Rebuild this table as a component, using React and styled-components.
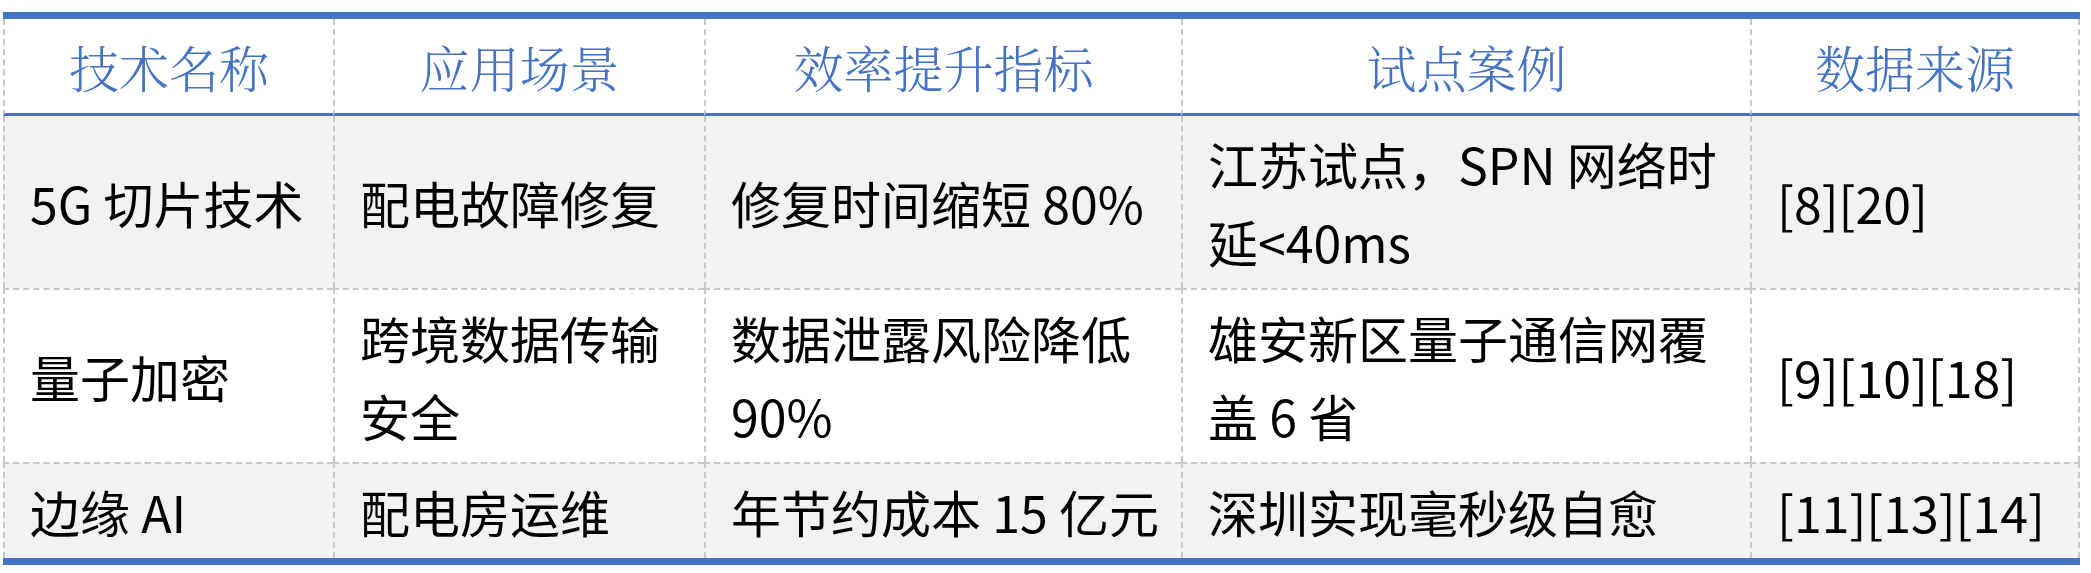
import React from "react";
import styled, { createGlobalStyle } from "styled-components";

const Global = createGlobalStyle`
  html, body { margin: 0; padding: 0; background: #ffffff; }
  body { font-family: "Noto Sans CJK SC", "Noto Sans", sans-serif; }
`;

const BLUE = "#4472C4";
const DASH = "2px dashed #c8c8c8";

const Page = styled.div`
  padding: 12px 0 0 3px;
`;

const Table = styled.table`
  width: 2077px;
  table-layout: fixed;
  border-collapse: separate;
  border-spacing: 0;
  border-top: 7px solid ${BLUE};
  border-bottom: 7px solid ${BLUE};
  font-size: 50px;
  line-height: 78px;
`;

const HeadCell = styled.th`
  font-family: "Noto Serif CJK SC", "Noto Sans CJK SC", serif;
  font-weight: 300;
  color: ${BLUE};
  text-align: center;
  padding: 8px 24px;
  border-bottom: 3px solid ${BLUE};
  border-left: ${DASH};
  &:last-child { border-right: ${DASH}; }
`;

const Row = styled.tr`
  background: ${(p) => (p.$shade ? "#f2f2f2" : "#ffffff")};
`;

const Cell = styled.td`
  font-family: "Noto Sans CJK SC", "Noto Sans", sans-serif;
  font-weight: 400;
  color: #000000;
  text-align: left;
  vertical-align: middle;
  padding: 8px 22px 8px 25px;
  border-left: ${DASH};
  border-top: ${(p) => (p.$first ? "none" : DASH)};
  &:last-child { border-right: ${DASH}; }
  word-break: break-all;
`;

const widths = [330, 371, 477, 569, 330];
const headers = ["技术名称", "应用场景", "效率提升指标", "试点案例", "数据来源"];
const rows = [
  ["5G 切片技术", "配电故障修复", "修复时间缩短 80%", "江苏试点，SPN 网络时延<40ms", "[8][20]"],
  ["量子加密", "跨境数据传输安全", "数据泄露风险降低 90%", "雄安新区量子通信网覆盖 6 省", "[9][10][18]"],
  ["边缘 AI", "配电房运维", "年节约成本 15 亿元", "深圳实现毫秒级自愈", "[11][13][14]"],
];

export default function App() {
  return (
    <>
      <Global />
      <Page>
        <Table>
          <colgroup>
            {widths.map((w, i) => (
              <col key={i} style={{ width: w }} />
            ))}
          </colgroup>
          <thead>
            <tr>
              {headers.map((h) => (
                <HeadCell key={h}>{h}</HeadCell>
              ))}
            </tr>
          </thead>
          <tbody>
            {rows.map((r, i) => (
              <Row key={i} $shade={i % 2 === 0}>
                {r.map((c, j) => (
                  <Cell key={j} $first={i === 0}>{c}</Cell>
                ))}
              </Row>
            ))}
          </tbody>
        </Table>
      </Page>
    </>
  );
}
